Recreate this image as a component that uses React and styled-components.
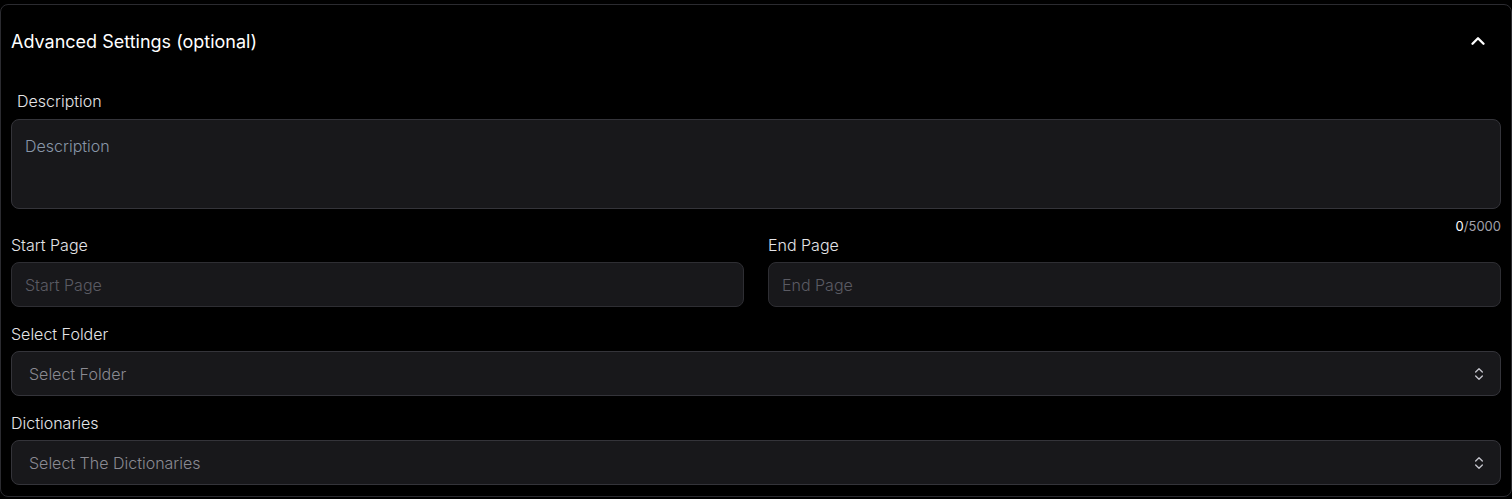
import React from 'react'
import styled, { createGlobalStyle } from 'styled-components'
import { ChevronUp, ChevronsUpDown } from 'lucide-react'

const GlobalStyle = createGlobalStyle`
  html, body {
    margin: 0;
    padding: 0;
    background: #000;
  }
  body {
    font-family: Inter, "Noto Sans", sans-serif;
    color: #f2f2f2;
  }
`

const Panel = styled.section`
  margin-top: 4px;
  height: 493px;
  box-sizing: border-box;
  border: 1px solid #2b2b30;
  border-radius: 8px;
  background: #000;
`

const Header = styled.div`
  display: flex;
  align-items: center;
  justify-content: space-between;
  height: 72px;
  padding: 0 22px 0 10px;
`

const Title = styled.h3`
  margin: 0;
  font-size: 18px;
  font-weight: 400;
  color: #fff;
`

const Body = styled.div`
  display: flex;
  flex-direction: column;
  padding: 0 10px;
`

const Field = styled.div`
  display: flex;
  flex-direction: column;
  flex: 1;
`

const Label = styled.label`
  font-size: 16px;
  font-weight: 300;
  color: #e4e4e7;
  line-height: 18px;
  padding-left: ${(p) => (p.$indent ? '6px' : '0')};
  margin-bottom: ${(p) => p.$gap || '8px'};
`

const TextArea = styled.textarea`
  box-sizing: border-box;
  height: 90px;
  resize: none;
  background: #18181b;
  border: 1px solid #34343a;
  border-radius: 8px;
  padding: 16px 13px;
  font-family: inherit;
  font-size: 16px;
  font-weight: 300;
  color: #fff;
  outline: none;
  &::placeholder {
    color: #8896a8;
  }
`

const Counter = styled.div`
  align-self: flex-end;
  font-size: 13px;
  color: #a1a1aa;
  margin-top: 9px;
  line-height: 16px;
  span {
    color: #fff;
  }
`

const Row = styled.div`
  display: flex;
  gap: 24px;
  margin-top: 2px;
`

const Input = styled.input`
  box-sizing: border-box;
  height: 45px;
  background: #18181b;
  border: 1px solid #2e2e33;
  border-radius: 8px;
  padding: 0 13px;
  font-family: inherit;
  font-size: 16px;
  font-weight: 300;
  color: #fff;
  outline: none;
  &::placeholder {
    color: #5b5b63;
  }
`

const Select = styled.div`
  box-sizing: border-box;
  height: 45px;
  display: flex;
  align-items: center;
  justify-content: space-between;
  background: #18181b;
  border: 1px solid #34343a;
  border-radius: 8px;
  padding: 0 13px 0 17px;
  font-size: 16px;
  font-weight: 300;
  color: #8a8a92;
  svg {
    color: #c4c4cc;
  }
`

const Block = styled.div`
  display: flex;
  flex-direction: column;
  margin-top: ${(p) => p.$top || '0'};
`

export default function App() {
  return (
    <>
      <GlobalStyle />
      <Panel>
        <Header>
          <Title>Advanced Settings (optional)</Title>
          <ChevronUp size={22} strokeWidth={2.6} color="#fff" />
        </Header>
        <Body>
          <Block $top="15px">
            <Label $indent $gap="9px">Description</Label>
            <TextArea placeholder="Description" />
            <Counter>
              <span>0</span>/5000
            </Counter>
          </Block>
          <Row>
            <Field>
              <Label>Start Page</Label>
              <Input placeholder="Start Page" />
            </Field>
            <Field>
              <Label>End Page</Label>
              <Input placeholder="End Page" />
            </Field>
          </Row>
          <Block $top="18px">
            <Label>Select Folder</Label>
            <Select>
              Select Folder
              <ChevronsUpDown size={16} strokeWidth={2} />
            </Select>
          </Block>
          <Block $top="18px">
            <Label>Dictionaries</Label>
            <Select>
              Select The Dictionaries
              <ChevronsUpDown size={16} strokeWidth={2} />
            </Select>
          </Block>
        </Body>
      </Panel>
    </>
  )
}
